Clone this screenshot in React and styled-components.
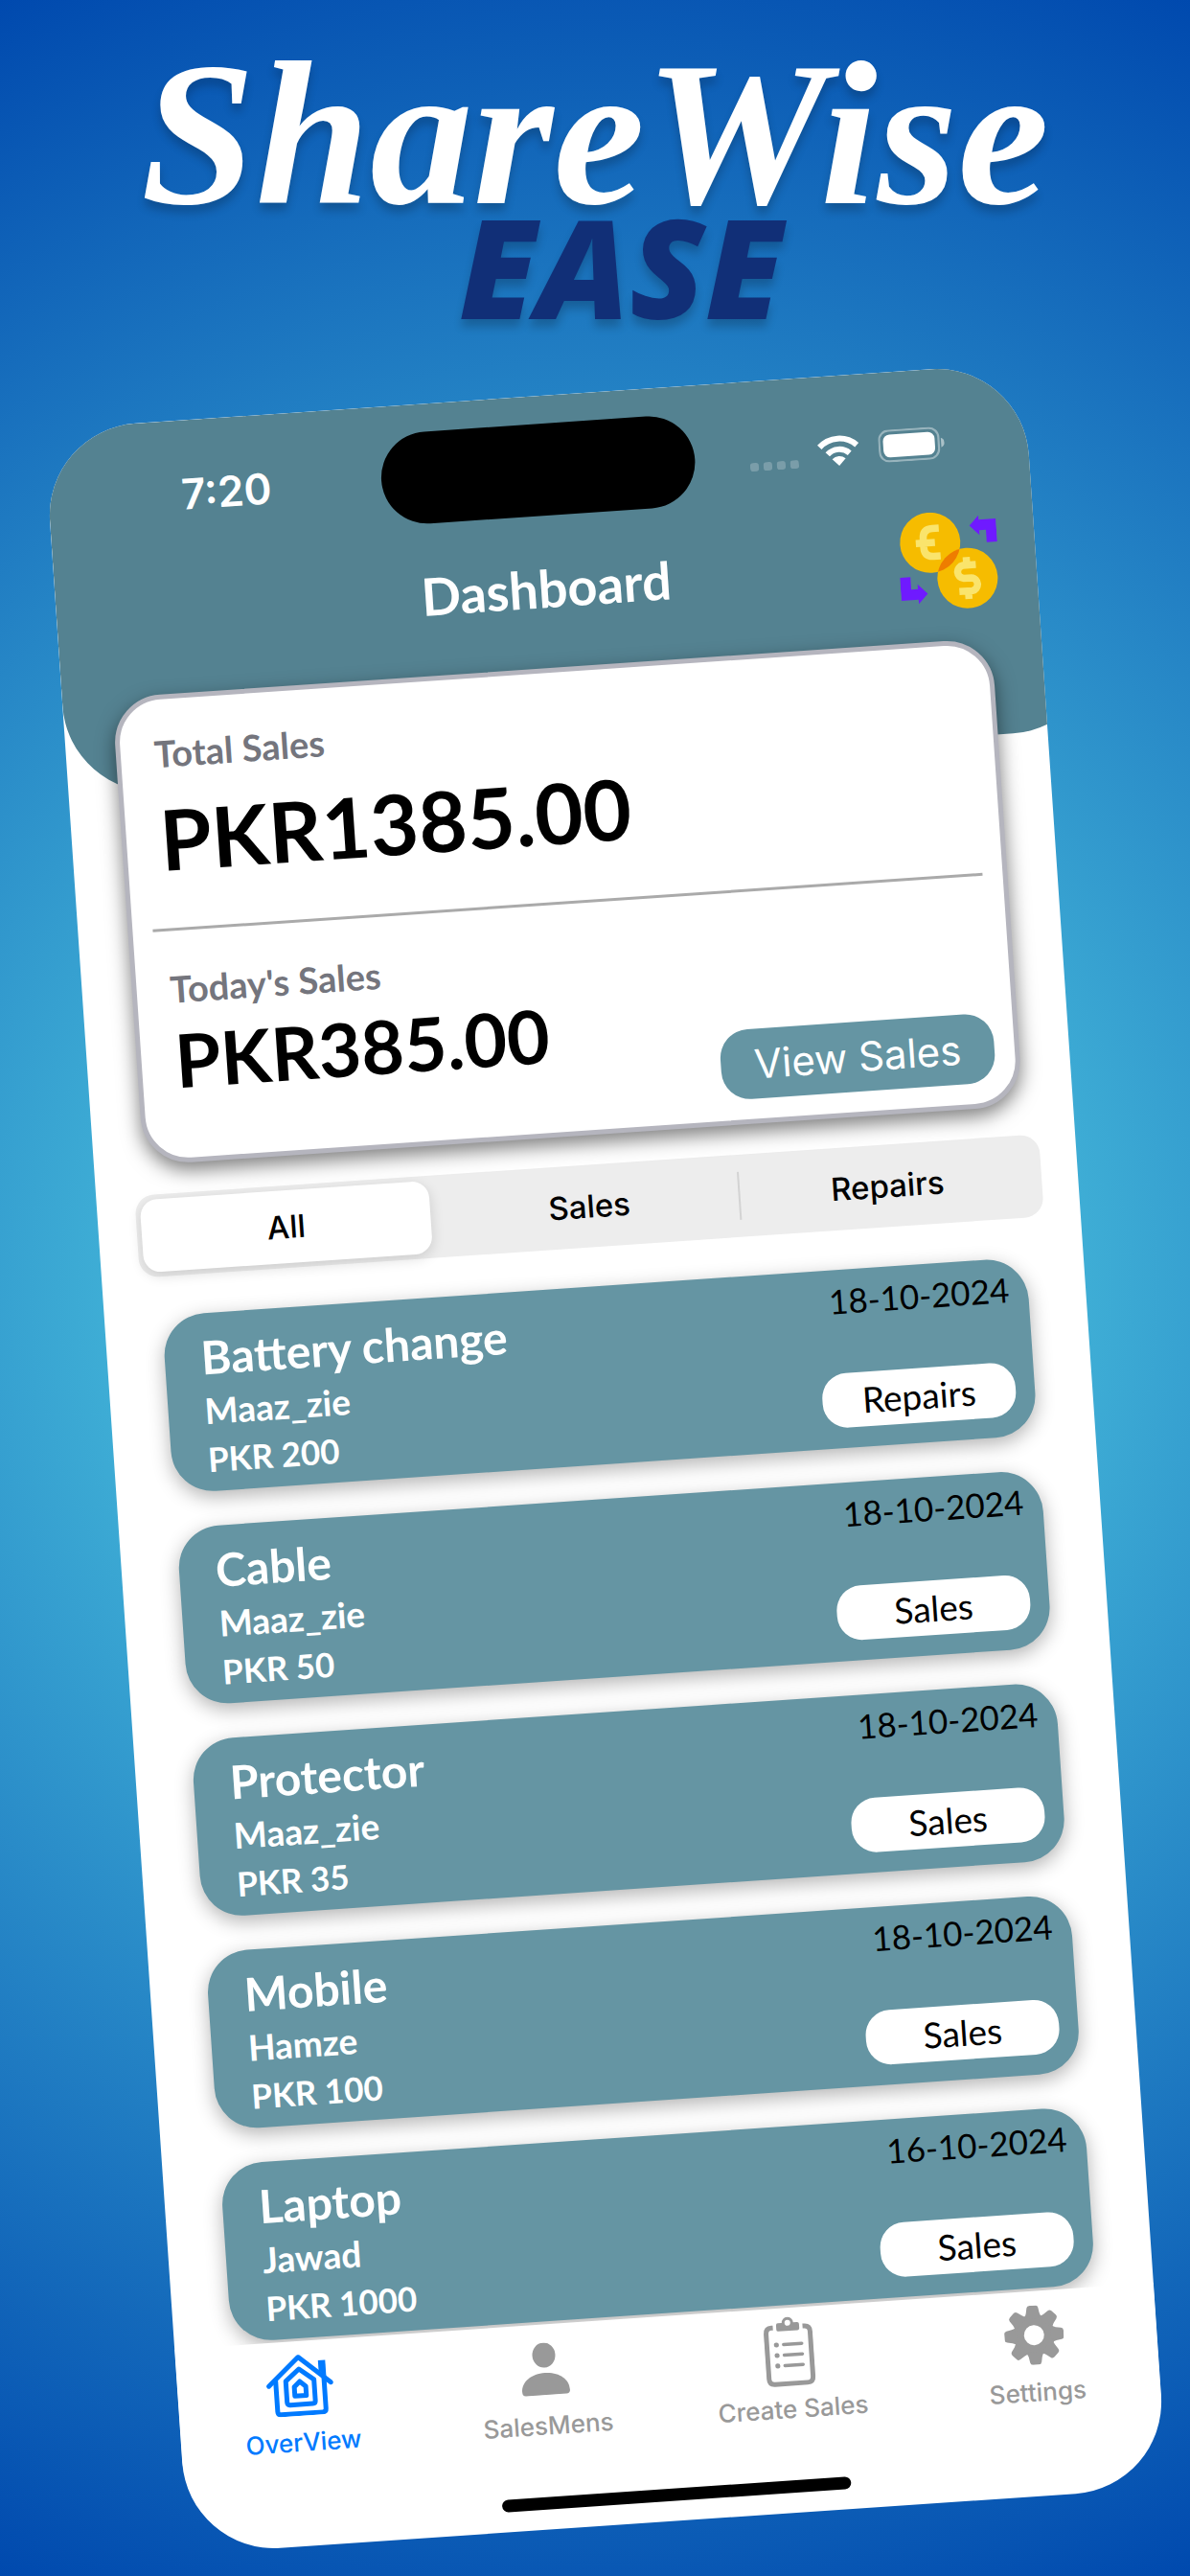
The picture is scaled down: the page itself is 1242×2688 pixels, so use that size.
import React, { useState } from "react";
import styled, { createGlobalStyle } from "styled-components";

const humanist = `Lato, "Open Sans", sans-serif`;
const system = `Inter, "Liberation Sans", sans-serif`;

const GlobalStyle = createGlobalStyle`
  *, *::before, *::after { box-sizing: border-box; }
  html, body { margin: 0; padding: 0; }
  body { font-family: ${humanist}; overflow-x: hidden; }
  h1, h2, p, ul { margin: 0; padding: 0; }
  button { border: 0; padding: 0; background: none; font: inherit; color: inherit; cursor: pointer; }
  svg { display: block; }
`;

const Poster = styled.main`
  min-height: 100vh;
  padding: 50px 0 55px;
  overflow: hidden;
  background: radial-gradient(circle farthest-corner at 50% 50%, #5fe2ea, #0049ae);
`;

const Brand = styled.h1`
  display: flex;
  flex-direction: column;
  align-items: center;
  text-shadow: 0 8px 10px rgba(0, 0, 0, 0.2);
`;

const BrandName = styled.span`
  font: italic 700 215px/180px "Liberation Serif", serif;
  color: #fff;
`;

const BrandTag = styled.span`
  padding-left: 54px;
  font: italic 800 144px/94px "Open Sans", sans-serif;
  color: #112f77;
`;

const Stage = styled.div`
  padding: 87px 98px 0 120px;
`;

const Phone = styled.section`
  overflow: hidden;
  border-radius: 96px;
  background: #fff;
  transform: rotate(-3.9deg);
`;

const Header = styled.header`
  height: 385px;
  margin-right: -60px;
  padding: 29px 60px 0 0;
  border-radius: 0 0 96px 96px;
  background: #548291;
  color: #fff;
`;

const StatusBar = styled.div`
  display: grid;
  grid-template-columns: 1fr 328px 1fr;
  align-items: center;
`;

const Clock = styled.time`
  padding-left: 24px;
  text-align: center;
  font: 600 44px/48px ${system};
`;

const Island = styled.div`
  height: 96px;
  border-radius: 48px;
  background: #000;
`;

const StatusIcons = styled.div`
  display: flex;
  justify-content: center;
  align-items: flex-end;
  gap: 20px;
  height: 34px;
  padding-right: 30px;
`;

const NavBar = styled.div`
  display: grid;
  grid-template-columns: 1fr auto 1fr;
  align-items: center;
  margin-top: 24px;
  padding: 0 39px;
`;

const NavTitle = styled.h2`
  grid-column: 2;
  font: 700 54px/60px ${humanist};
`;

const CoinButton = styled.button`
  justify-self: end;
`;

const Summary = styled.section`
  position: relative;
  margin: -101px 52px 0;
  padding: 34px 21px 21px;
  border: 5px solid #b5b5be;
  border-radius: 50px;
  background: #fff;
  box-shadow: 0 8px 20px rgba(0, 0, 0, 0.5);
`;

const Figure = styled.div`
  display: flex;
  flex-direction: column;
  gap: ${(p) => p.$gap}px;
  padding-left: 14px;
`;

const FigureLabel = styled.p`
  font: 700 38px/44px ${humanist};
  color: #74757d;
`;

const Amount = styled.p`
  font: 700 ${(p) => (p.$large ? "87px/100px" : "77px/90px")} ${humanist};
  color: #000;
`;

const Divider = styled.hr`
  height: 3px;
  margin: 43px 0 38px;
  border: 0;
  background: #aaa;
`;

const TodayRow = styled.div`
  display: flex;
  justify-content: space-between;
  align-items: flex-end;
`;

const TodayFigure = styled(Figure)`
  padding-bottom: 37px;
`;

const ViewButton = styled.button`
  && {
    width: 286px;
    height: 73px;
    border-radius: 30px;
    background: #6595a3;
    color: #fff;
    font: 400 42px/48px ${system};
  }
`;

const Segments = styled.div`
  display: grid;
  grid-template-columns: repeat(3, 1fr);
  margin: 31px 38px 0 40px;
  padding: 5px;
  height: 86px;
  border-radius: 20px;
  background: #ededed;
`;

const Segment = styled.button`
  && {
    margin-right: ${(p) => (p.$active ? "10px" : "0")};
    border-radius: ${(p) => (p.$active ? "18px" : "0")};
    background: ${(p) =>
      p.$active ? "#fff" : p.$divided ? "linear-gradient(#d3d3d3, #d3d3d3) left center / 2px 50px no-repeat" : "none"};
    box-shadow: ${(p) => (p.$active ? "0 4px 14px rgba(0, 0, 0, 0.14)" : "none")};
    font: 500 33px/40px ${system};
    color: #000;
  }
`;

const List = styled.ul`
  display: flex;
  flex-direction: column;
  gap: 36px;
  padding: 41px 60px 3px;
  overflow: hidden;
  list-style: none;
`;

const Sale = styled.li`
  display: flex;
  justify-content: space-between;
  height: 186px;
  padding: 0 20px 0 38px;
  border-radius: 44px;
  background: #6595a3;
  box-shadow: 0 6px 20px rgba(0, 0, 0, 0.3);
`;

const SaleInfo = styled.div`
  display: flex;
  flex-direction: column;
  gap: 6px;
  padding-top: 18px;
  color: #fff;
  font: 700 35px/44px ${humanist};
`;

const SaleTitle = styled.h3`
  margin: 0;
  font: 700 48px/56px ${humanist};
`;

const Person = styled.p`
  font-size: 37px;
`;

const SaleMeta = styled.div`
  display: flex;
  flex-direction: column;
  justify-content: space-between;
  align-items: flex-end;
  padding: 10px 0 21px;
  font: 400 35px/44px ${humanist};
  color: #000;
`;

const Kind = styled.span`
  width: 202px;
  border-radius: 26px;
  background: #fff;
  text-align: center;
  font: 400 37px/57px ${humanist};
`;

const TabBar = styled.nav`
  display: grid;
  grid-template-columns: repeat(4, 1fr);
  padding-top: 9px;
  background: #fff;
`;

const Tab = styled.button`
  && {
    display: flex;
    flex-direction: column;
    align-items: center;
    gap: 7px;
    color: ${(p) => (p.$active ? "#007aff" : "#999")};
    font: 500 26px/32px ${system};
  }
`;

const TabIcon = styled.span`
  display: flex;
  align-items: center;
  height: 74px;
`;

const HomeIndicator = styled.div`
  width: 365px;
  height: 13px;
  margin: 58px auto 21px;
  border-radius: 7px;
  background: #000;
`;

const SignalDots = () => (
  <svg width="51" height="9" viewBox="0 0 51 9" fill="#fff" opacity="0.22" aria-hidden="true">
    {[0, 14, 28, 42].map((x) => (
      <rect key={x} x={x} width="9" height="9" rx="3" />
    ))}
  </svg>
);

const WifiIcon = () => (
  <svg width="44" height="33" viewBox="0 0 44 33" fill="none" stroke="#fff" strokeWidth="6" aria-hidden="true">
    <path d="M2.500 12.500a28 28 0 0 1 39 0" />
    <path d="M10.500 20.500a16.500 16.500 0 0 1 23 0" />
    <path d="M22 33l-7-7.200a10 10 0 0 1 14 0z" fill="#fff" stroke="none" />
  </svg>
);

const BatteryIcon = () => (
  <svg width="69" height="34" viewBox="0 0 69 34" aria-hidden="true">
    <rect x="1" y="1" width="62" height="32" rx="10" fill="none" stroke="#fff" strokeOpacity="0.4" strokeWidth="2.2" />
    <rect x="5" y="5" width="54" height="24" rx="7" fill="#fff" />
    <path d="M65.500 12q3.500 1.500 3.500 5t-3.500 5z" fill="#fff" fillOpacity="0.5" />
  </svg>
);

const CoinsIcon = () => (
  <svg width="104" height="103" viewBox="0 0 104 103" aria-hidden="true">
    <defs>
      <clipPath id="euroCoin">
        <circle cx="34" cy="31.5" r="31.5" />
      </clipPath>
    </defs>
    <circle cx="34" cy="31.5" r="31.5" fill="#f6bc00" />
    <circle cx="70.5" cy="71" r="31.5" fill="#f6bc00" />
    <circle cx="70.5" cy="71" r="31.5" fill="#ee7d00" clipPath="url(#euroCoin)" />
    <g fill="none" stroke="#fae46c" strokeWidth="7.5">
      <path d="M44 17h-7q-10 0-10 10v9q0 10 10 10h7M19 31.500h20" />
      <path d="M80 57.500H66.500a6.800 6.800 0 0 0 0 13.500h8a6.800 6.800 0 0 1 0 13.500H61M70.500 49v8M70.500 85v8" />
    </g>
    <g fill="#6f1aff">
      <path d="M76 16.500L86 6.500V11h18v24H93V22h-7v5z" />
      <path d="M28 84.500L18 94.500V90H0V66h11v13h7v-5z" />
    </g>
  </svg>
);

const HouseIcon = () => (
  <svg
    width="70" height="64" viewBox="0 0 70 64" fill="none" stroke="currentColor"
    strokeWidth="5" strokeLinecap="round" strokeLinejoin="round" aria-hidden="true"
  >
    <path d="M2.500 31L35 2.500L67.500 31" />
    <path d="M10 26v32q0 3.500 3.500 3.500H57q3.500 0 3.500-3.500V26" />
    <path d="M20.500 27L35 15l15 12v22q0 3-3 3H23.500q-3 0-3-3z" />
    <path d="M29 33.500l6-5.500 6 5.500V43H29z" />
    <path d="M55.500 7.500h7.500v17l-7.500-6.500z" fill="currentColor" stroke="none" />
  </svg>
);

const PersonIcon = () => (
  <svg width="50" height="55" viewBox="0 0 50 55" fill="currentColor" aria-hidden="true">
    <ellipse cx="25" cy="13" rx="12" ry="13" />
    <path d="M0 50.500C0 39 11 31.500 25 31.500s25 7.500 25 19q0 4-4 4H4q-4 0-4-4z" />
  </svg>
);

const ClipboardIcon = () => (
  <svg width="52" height="74" viewBox="0 0 52 74" fill="none" stroke="currentColor" aria-hidden="true">
    <path d="M10.500 11H9q-6 0-6 6v47q0 6 6 6h34q6 0 6-6V17q0-6-6-6h-1.500" strokeWidth="5" />
    <path
      d="M14 8.500q0-2 2-2h4a6 6 0 0 1 12 0h4q2 0 2 2V13q0 2-2 2H16q-2 0-2-2zM29 6.500a3 3 0 1 0-6 0a3 3 0 1 0 6 0z"
      fill="currentColor" fillRule="evenodd" stroke="none"
    />
    {[29, 40, 51].map((y) => (
      <g key={y}>
        <circle cx="13" cy={y} r="2.6" fill="currentColor" stroke="none" />
        <path d={`M20.500 ${y}H39.500`} strokeWidth="3.500" strokeLinecap="round" />
      </g>
    ))}
  </svg>
);

const GearIcon = () => (
  <svg width="62" height="62" viewBox="-31 -31 62 62" fill="currentColor" aria-hidden="true">
    <circle r="16" fill="none" stroke="currentColor" strokeWidth="11" />
    {[0, 45, 90, 135, 180, 225, 270, 315].map((a) => (
      <path key={a} transform={`rotate(${a})`} d="M-10.500-17.500q3-2 3.500-5.500l1-5.500q.5-2.500 3-2.500h6q2.500 0 3 2.500l1 5.500q.5 3.500 3.500 5.500z" />
    ))}
  </svg>
);

const sales = [
  { title: "Battery change", person: "Maaz_zie", price: "PKR 200", date: "18-10-2024", kind: "Repairs" },
  { title: "Cable", person: "Maaz_zie", price: "PKR 50", date: "18-10-2024", kind: "Sales" },
  { title: "Protector", person: "Maaz_zie", price: "PKR 35", date: "18-10-2024", kind: "Sales" },
  { title: "Mobile", person: "Hamze", price: "PKR 100", date: "18-10-2024", kind: "Sales" },
  { title: "Laptop", person: "Jawad", price: "PKR 1000", date: "16-10-2024", kind: "Sales" },
];

const filters = ["All", "Sales", "Repairs"];

const tabs = [
  { label: "OverView", Icon: HouseIcon },
  { label: "SalesMens", Icon: PersonIcon },
  { label: "Create Sales", Icon: ClipboardIcon },
  { label: "Settings", Icon: GearIcon },
];

export default function App() {
  const [filter, setFilter] = useState("All");
  const [tab, setTab] = useState("OverView");
  const shown = sales.filter((s) => filter === "All" || s.kind === filter);

  return (
    <>
      <GlobalStyle />
      <Poster>
        <Brand>
          <BrandName>ShareWise</BrandName>
          <BrandTag>EASE</BrandTag>
        </Brand>
        <Stage>
          <Phone>
            <Header>
              <StatusBar>
                <Clock>7:20</Clock>
                <Island />
                <StatusIcons>
                  <SignalDots />
                  <WifiIcon />
                  <BatteryIcon />
                </StatusIcons>
              </StatusBar>
              <NavBar>
                <NavTitle>Dashboard</NavTitle>
                <CoinButton aria-label="Currency">
                  <CoinsIcon />
                </CoinButton>
              </NavBar>
            </Header>

            <Summary>
              <Figure $gap={18}>
                <FigureLabel>Total Sales</FigureLabel>
                <Amount $large>PKR1385.00</Amount>
              </Figure>
              <Divider />
              <TodayRow>
                <TodayFigure $gap={7}>
                  <FigureLabel>Today's Sales</FigureLabel>
                  <Amount>PKR385.00</Amount>
                </TodayFigure>
                <ViewButton>View Sales</ViewButton>
              </TodayRow>
            </Summary>

            <Segments>
              {filters.map((name, i) => (
                <Segment
                  key={name}
                  $active={filter === name}
                  $divided={i > 0 && filter !== filters[i - 1]}
                  aria-pressed={filter === name}
                  onClick={() => setFilter(name)}
                >
                  {name}
                </Segment>
              ))}
            </Segments>

            <List>
              {shown.map((s) => (
                <Sale key={s.title}>
                  <SaleInfo>
                    <SaleTitle>{s.title}</SaleTitle>
                    <Person>{s.person}</Person>
                    <p>{s.price}</p>
                  </SaleInfo>
                  <SaleMeta>
                    <time>{s.date}</time>
                    <Kind>{s.kind}</Kind>
                  </SaleMeta>
                </Sale>
              ))}
            </List>

            <TabBar>
              {tabs.map(({ label, Icon }) => (
                <Tab key={label} $active={tab === label} onClick={() => setTab(label)}>
                  <TabIcon>
                    <Icon />
                  </TabIcon>
                  {label}
                </Tab>
              ))}
            </TabBar>
            <HomeIndicator />
          </Phone>
        </Stage>
      </Poster>
    </>
  );
}
